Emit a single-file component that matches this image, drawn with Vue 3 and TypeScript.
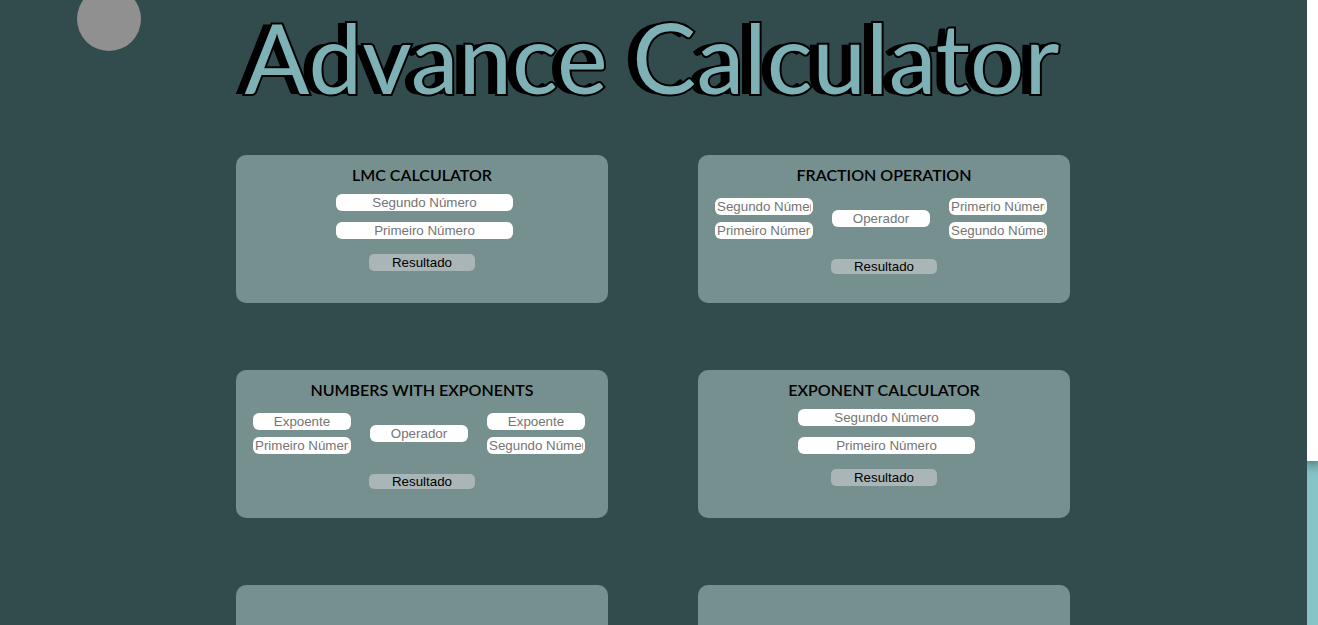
<script setup lang="ts">
import { ref } from 'vue'

interface Calculator {
  id: string
  title: string
  kind: 'pair' | 'operation' | 'empty'
  fields: string[]
}

const calculators: Calculator[] = [
  { id: 'lmc', title: 'LMC CALCULATOR', kind: 'pair', fields: ['Segundo Número', 'Primeiro Número'] },
  {
    id: 'fraction',
    title: 'FRACTION OPERATION',
    kind: 'operation',
    fields: ['Segundo Número', 'Primeiro Número', 'Operador', 'Primerio Número', 'Segundo Número'],
  },
  {
    id: 'numbers',
    title: 'NUMBERS WITH EXPONENTS',
    kind: 'operation',
    fields: ['Expoente', 'Primeiro Número', 'Operador', 'Expoente', 'Segundo Número'],
  },
  { id: 'exponent', title: 'EXPONENT CALCULATOR', kind: 'pair', fields: ['Segundo Número', 'Primeiro Número'] },
  { id: 'extra-one', title: '', kind: 'empty', fields: [] },
  { id: 'extra-two', title: '', kind: 'empty', fields: [] },
]

const values = ref<Record<string, string[]>>(
  Object.fromEntries(calculators.map((c) => [c.id, c.fields.map(() => '')])),
)

// Operation cards lay out their fields as left pair, operator, right pair.
const operationColumns = [[0, 1], [2], [3, 4]]
</script>

<template>
  <div class="page">
    <main class="content">
      <span class="dot" aria-hidden="true"></span>
      <h1 class="title">Advance Calculator</h1>
      <div class="grid">
        <section v-for="calc in calculators" :key="calc.id" class="card" :class="calc.kind">
          <template v-if="calc.kind !== 'empty'">
            <h2 class="heading">{{ calc.title }}</h2>
            <div v-if="calc.kind === 'pair'" class="stack">
              <input
                v-for="(label, i) in calc.fields"
                :key="i"
                v-model="values[calc.id][i]"
                class="field"
                type="text"
                :placeholder="label"
                :aria-label="label"
              />
            </div>
            <div v-else class="columns">
              <div v-for="(column, c) in operationColumns" :key="c" class="column">
                <input
                  v-for="i in column"
                  :key="i"
                  v-model="values[calc.id][i]"
                  class="field"
                  type="text"
                  :placeholder="calc.fields[i]"
                  :aria-label="calc.fields[i]"
                />
              </div>
            </div>
            <button type="button" class="result">Resultado</button>
          </template>
        </section>
      </div>
    </main>
    <div class="track" aria-hidden="true"><div class="thumb"></div></div>
  </div>
</template>

<style>
body {
  margin: 0;
  background: #324b4c;
}
</style>

<style scoped>
.page {
  display: flex;
  height: 100vh;
  overflow: hidden;
  background: #324b4c;
  font-family: Lato, 'Liberation Sans', sans-serif;
}

.content {
  position: relative;
  flex: 1;
  overflow: hidden;
}

.dot {
  position: absolute;
  top: -13px;
  left: 77px;
  width: 64px;
  height: 64px;
  border-radius: 50%;
  background: #909090;
}

.title {
  margin: 0;
  padding-right: 3px;
  font-size: 96px;
  font-weight: 400;
  line-height: 114px;
  text-align: center;
  white-space: nowrap;
  color: #7db1b5;
  -webkit-text-stroke: 4px #000;
  paint-order: stroke fill;
  text-shadow: -9px 0 #000;
}

.grid {
  display: grid;
  grid-template-columns: repeat(2, 372px);
  grid-auto-rows: 148px;
  justify-content: center;
  gap: 67px 90px;
  margin-top: 41px;
  padding-right: 1px;
}

.card {
  display: flex;
  flex-direction: column;
  align-items: center;
  box-sizing: border-box;
  padding-top: 10px;
  border-radius: 10px;
  background: #768f8f;
}

.heading {
  margin: 0;
  font-size: 16px;
  font-weight: 600;
  line-height: 20px;
  color: #000;
}

.field {
  box-sizing: border-box;
  width: 177px;
  height: 17px;
  padding: 1px 2px;
  border: 0;
  border-radius: 6px;
  background: #fff;
  font-family: 'Liberation Sans', Arial, sans-serif;
  text-align: center;
}

.field::placeholder {
  color: #757575;
}

.stack {
  display: flex;
  flex-direction: column;
  gap: 11px;
  margin-top: 9px;
  padding-left: 5px;
}

.columns {
  display: flex;
  align-items: center;
  gap: 19px;
  margin-top: 13px;
  padding-right: 6px;
}

.column {
  display: flex;
  flex-direction: column;
  gap: 7px;
}

.column .field {
  width: 98px;
}

.result {
  width: 106px;
  height: 17px;
  margin-top: 15px;
  padding: 0;
  border: 0;
  border-radius: 5px;
  background: #a9b5b7;
  color: #000;
  font-family: 'Liberation Sans', Arial, sans-serif;
  line-height: 15px;
}

.operation .result {
  height: 15px;
  margin-top: 20px;
}

.track {
  width: 11px;
  overflow: hidden;
  background: #87c4c8;
}

.thumb {
  height: 73.8%;
  background: #fff;
  box-shadow: 0 2px 14px rgba(0, 0, 0, 0.8);
}
</style>
